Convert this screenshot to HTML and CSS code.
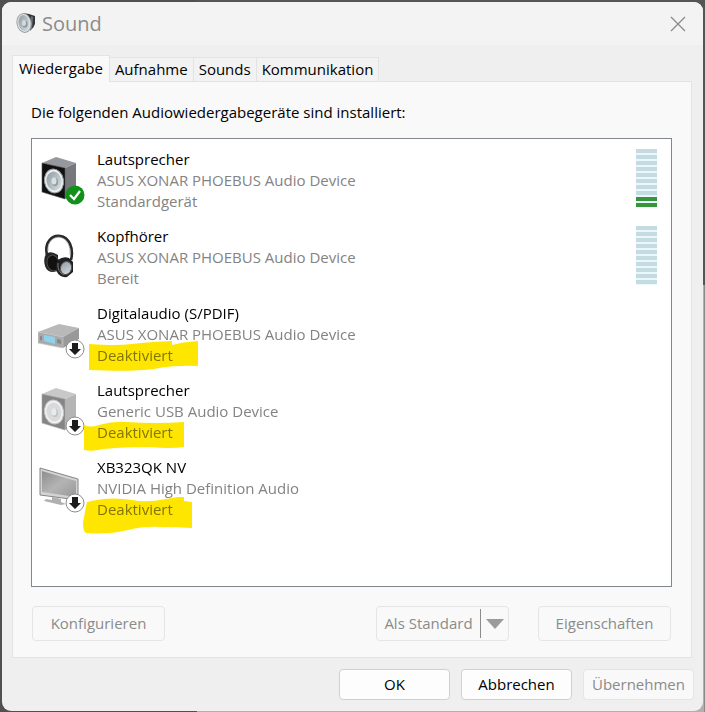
FILE: index.html
```
<!DOCTYPE html>
<html lang="de">
<head>
<meta charset="UTF-8" />
<meta name="viewport" content="width=device-width, initial-scale=1" />
<title>Sound</title>
<link rel="stylesheet" href="styles.css">
</head>
<body>

<!-- shared icon parts -->
<svg class="defs" width="0" height="0" aria-hidden="true">
  <defs>
    <linearGradient id="cone" x1="0" y1="0" x2="1" y2="1">
      <stop offset="0" stop-color="#8f9ba2" />
      <stop offset=".6" stop-color="#b9c3c8" />
      <stop offset="1" stop-color="#dde3e6" />
    </linearGradient>
    <linearGradient id="screen" x1="0" y1="0" x2="1" y2="1">
      <stop offset="0" stop-color="#8e8e8e" />
      <stop offset=".5" stop-color="#b4b4b4" />
      <stop offset="1" stop-color="#989898" />
    </linearGradient>
    <symbol id="arrow-badge" viewBox="0 0 20 20">
      <circle cx="10" cy="10" r="9" fill="#fff" stroke="#8c8c8c" stroke-width="1" />
      <path d="M7 4h6v6h3l-6 6-6-6h3z" fill="#1c1c1c" />
    </symbol>
    <symbol id="check-badge" viewBox="0 0 20 20">
      <circle cx="10" cy="10" r="9.5" fill="#12911a" />
      <path d="M5 10l4 4 6-8" fill="none" stroke="#fff" stroke-width="2.2" />
    </symbol>
  </defs>
</svg>

<main class="window">
  <header class="titlebar">
    <svg class="title-icon" width="20" height="22" viewBox="0 0 20 22" aria-hidden="true">
      <path d="M7 0l6 1 6 2v8l-2 4-7 4z" fill="#33363a" />
      <path d="M15 3l2 1-1 12-2 2z" fill="#6d7276" />
      <ellipse cx="8" cy="10" rx="7" ry="9.5" transform="rotate(-10 8 10)" fill="#e5e8ea" stroke="#9aa0a4" />
      <ellipse cx="8" cy="10" rx="5.5" ry="8" transform="rotate(-10 8 10)" fill="url(#cone)" />
      <ellipse cx="9" cy="11" rx="2.5" ry="3.5" fill="#8c9499" />
      <ellipse cx="8" cy="10" rx="2" ry="3" fill="#d3dadd" />
    </svg>
    <h1>Sound</h1>
    <button class="close" type="button" aria-label="Schließen">
      <svg width="16" height="16" viewBox="0 0 16 16"><path d="M1 1l14 14M15 1L1 15" stroke="#8a8a8a" stroke-width="1.3" /></svg>
    </button>
  </header>

  <div class="tabs" role="tablist">
    <button class="tab active" type="button" role="tab" aria-selected="true">Wiedergabe</button>
    <button class="tab" type="button" role="tab">Aufnahme</button>
    <button class="tab" type="button" role="tab">Sounds</button>
    <button class="tab" type="button" role="tab">Kommunikation</button>
  </div>

  <section class="panel">
    <p class="intro">Die folgenden Audiowiedergabegeräte sind installiert:</p>

    <ul class="devices">
      <li class="device">
        <div class="icon">
          <svg width="44" height="44" viewBox="-3 0 44 44" aria-hidden="true">
            <path d="M1 6L15 0l20 6-11 5z" fill="#97989d" />
            <path d="M24 11l11-5v27l-11 9z" fill="#77787e" />
            <path d="M1 6l23 5v31L1 35z" fill="#111" stroke="#555" stroke-width=".6" />
            <ellipse cx="13" cy="24" rx="9.5" ry="12" transform="rotate(-10 13 24)" fill="#eceff0" stroke="#949a9d" />
            <ellipse cx="13" cy="24" rx="7.5" ry="9.5" transform="rotate(-10 13 24)" fill="url(#cone)" />
            <ellipse cx="14" cy="25" rx="3" ry="4" fill="#909a9e" />
            <ellipse cx="13" cy="24" rx="2.5" ry="3.5" fill="#d9e0e2" />
          </svg>
          <svg class="badge" aria-hidden="true"><use href="#check-badge" /></svg>
        </div>
        <div class="text">
          <strong>Lautsprecher</strong>
          <span>ASUS XONAR PHOEBUS Audio Device</span>
          <span>Standardgerät</span>
        </div>
        <div class="meter"><i></i><i></i><i></i><i></i><i></i><i></i><i></i><i></i><i class="on"></i><i class="on"></i></div>
      </li>

      <li class="device">
        <div class="icon">
          <svg width="44" height="44" viewBox="-3 0 44 44" aria-hidden="true">
            <path d="M6 21C3 8 11 1 19 2c9 1 14 12 11 24" fill="none" stroke="#292929" stroke-width="2.6" />
            <path d="M7 17C6 8 12 3 18 3c7 1 12 8 11 18" fill="none" stroke="#969696" stroke-width=".7" />
            <path d="M5 20q3-3 8-1l4 2v16l-5 1q-6 0-8-6-2-7 1-12z" fill="#252525" />
            <ellipse cx="12" cy="29" rx="6" ry="8" transform="rotate(-12 12 29)" fill="#111" stroke="#505050" />
            <path d="M17 26q5-4 11-2l4 4v10l-6 5q-7 1-10-5-2-7 1-12z" fill="#202020" />
            <path d="M17 29q-1 9 6 12" fill="none" stroke="#777" stroke-width="1" />
            <ellipse cx="25" cy="34" rx="5.5" ry="6.5" transform="rotate(18 25 34)" fill="url(#cone)" stroke="#555" />
          </svg>
        </div>
        <div class="text">
          <strong>Kopfhörer</strong>
          <span>ASUS XONAR PHOEBUS Audio Device</span>
          <span>Bereit</span>
        </div>
        <div class="meter"><i></i><i></i><i></i><i></i><i></i><i></i><i></i><i></i><i></i><i></i></div>
      </li>

      <li class="device">
        <div class="icon">
          <svg width="44" height="44" viewBox="0 0 44 44" aria-hidden="true">
            <path d="M0 21L21 13l20 4-16 9z" fill="#b9b9b9" />
            <path d="M25 26l16-9v11l-16 9z" fill="#999" />
            <path d="M0 21l25 5v11L0 32z" fill="#a9a9a9" stroke="#c4c4c4" stroke-width=".7" />
            <path d="M6 24l11 2v7L6 30z" fill="#8fd0ec" />
            <path d="M2 25l2 .5v4L2 29zM19 28l4 1v4l-4-1z" fill="#85898c" />
          </svg>
          <svg class="badge" aria-hidden="true"><use href="#arrow-badge" /></svg>
        </div>
        <div class="text">
          <svg class="marker" width="112" height="32" viewBox="0 0 112 32" aria-hidden="true"><path d="M0 3q26 2 43 0t40-3v4q10-3 26-4v25q-24-1-44 3-22 3-65 1z" /></svg>
          <strong>Digitalaudio (S/PDIF)</strong>
          <span>ASUS XONAR PHOEBUS Audio Device</span>
          <span>Deaktiviert</span>
        </div>
      </li>

      <li class="device">
        <div class="icon">
          <svg width="44" height="44" viewBox="-3 0 44 44" aria-hidden="true">
            <path d="M1 6L15 0l20 6-11 5z" fill="#c8c8c8" />
            <path d="M24 11l11-5v27l-11 9z" fill="#b5b5b6" />
            <path d="M1 6l23 5v31L1 35z" fill="#858585" stroke="#aaa" stroke-width=".6" />
            <ellipse cx="13" cy="24" rx="9.5" ry="12" transform="rotate(-10 13 24)" fill="#f2f2f2" stroke="#c4c4c4" />
            <ellipse cx="13" cy="24" rx="7.5" ry="9.5" transform="rotate(-10 13 24)" fill="#d9dadb" />
            <ellipse cx="14" cy="25" rx="3" ry="4" fill="#bfc2c4" />
            <ellipse cx="13" cy="24" rx="2.5" ry="3.5" fill="#e9ebec" />
          </svg>
          <svg class="badge" aria-hidden="true"><use href="#arrow-badge" /></svg>
        </div>
        <div class="text">
          <svg class="marker usb" width="104" height="32" viewBox="0 0 104 32" aria-hidden="true"><path d="M1 5q7 3 15 0 14-4 28-3 30 2 57 0v25q-15 2-33 0-30 0-48 2-10 3-19 1z" /></svg>
          <strong>Lautsprecher</strong>
          <span>Generic USB Audio Device</span>
          <span>Deaktiviert</span>
        </div>
      </li>

      <li class="device">
        <div class="icon">
          <svg width="44" height="44" viewBox="0 0 44 44" aria-hidden="true">
            <path d="M14 32l9 2v3l5 2-5 1-17-4 2-2 6 1z" fill="#b0b0b0" />
            <path d="M2 3l38 11v21L2 30z" fill="#d4d4d4" stroke="#858585" stroke-width="1" />
            <path d="M4 6l34 10v16L4 27z" fill="url(#screen)" />
          </svg>
          <svg class="badge" aria-hidden="true"><use href="#arrow-badge" /></svg>
        </div>
        <div class="text">
          <svg class="marker nv" width="112" height="38" viewBox="0 0 112 38" aria-hidden="true"><path d="M4 5q22-6 45-2 14 3 34-1l18-3v5l8 1v26q-16-1-30-1-18-1-34 3-20 5-42 3-3-2-3-10 2-12 4-21z" /></svg>
          <strong>XB323QK NV</strong>
          <span>NVIDIA High Definition Audio</span>
          <span>Deaktiviert</span>
        </div>
      </li>
    </ul>

    <div class="actions">
      <button class="btn" type="button" disabled>Konfigurieren</button>
      <div class="split">
        <button type="button" disabled>Als Standard</button>
        <button class="drop" type="button" disabled aria-label="Standard auswählen">
          <svg width="18" height="10" viewBox="0 0 18 10"><path d="M0 0h18L9 10z" fill="#9b9b9b" /></svg>
        </button>
      </div>
      <button class="btn" type="button" disabled>Eigenschaften</button>
    </div>
  </section>

  <footer class="footer">
    <button class="btn" type="button">OK</button>
    <button class="btn" type="button">Abbrechen</button>
    <button class="btn" type="button" disabled>Übernehmen</button>
  </footer>
</main>

</body>
</html>
```
FILE: styles.css
```
* { box-sizing: border-box; }
body { margin: 0; padding: 2px 2px 1px; background: linear-gradient(#555 40%, #b0b0b0 40%) right / 72% 100% no-repeat #505050; color: #000; font-family: "Open Sans", "Noto Sans", sans-serif; font-size: 15px; line-height: 21px; }
button { font: inherit; color: inherit; margin: 0; padding: 0; border: 0; background: none; }
.defs { position: absolute; }

.window { background: #efefef; border-radius: 9px; overflow: hidden; padding-bottom: 11px; }

.titlebar { display: flex; align-items: center; height: 43px; padding: 0 17px 0 14px; background: #f3f3f3; }
.titlebar h1 { flex: 1; margin: 0 0 0 6px; font-size: 20px; font-weight: 400; color: #8b8b8b; }
.close { display: flex; }

.tabs { display: flex; align-items: flex-end; height: 36px; padding: 0 10px; }
.tab { height: 24px; padding: 0 5px; border: 1px solid #e3e3e3; border-bottom: 0; border-left: 0; background: #f2f2f2; }
.tab.active { position: relative; height: 27px; margin-bottom: -1px; padding: 0 6px 2px; border-left: 1px solid #e3e3e3; background: #f9f9f9; }

.panel { margin: 0 11px 0 10px; padding: 20px 19px 16px 18px; border: 1px solid #e3e3e3; background: #f9f9f9; }
.intro { margin: 0 0 15px; }

.devices { list-style: none; height: 449px; margin: 0; padding: 10px 14px 0 6px; border: 1px solid #828790; background: #fff; }
.device { display: flex; height: 77px; }
.icon { position: relative; flex: none; width: 48px; height: 48px; margin-top: 8px; }
.badge { position: absolute; left: 27px; top: 28px; width: 20px; height: 20px; }
.text { position: relative; z-index: 0; flex: 1; margin-left: 11px; }
.text strong, .text span { display: block; font-weight: 400; }
.text span { color: #838383; }

/* yellow highlighter strokes */
.marker { position: absolute; z-index: 1; left: -8px; top: 38px; fill: #ffe600; mix-blend-mode: multiply; }
.marker.usb { left: -14px; top: 40px; }
.marker.nv { left: -14px; top: 40px; }

.meter { display: flex; flex-direction: column; gap: 2px; flex: none; width: 21px; height: 59px; background: #eaf8fc; }
.meter i { height: 4px; background: #c4dbe1; }
.meter .on { background: #37963b; }

.actions { display: flex; margin-top: 19px; padding: 0 1px; }
.btn { border: 1px solid #d0d0d0; border-radius: 4px; background: #fdfdfd; }
.btn:disabled, .split { border: 1px solid #e5e5e5; border-radius: 4px; background: #f9f9f9; color: #8b8b8b; }
.actions .btn, .split { width: 133px; height: 35px; }
.split { display: flex; align-items: center; margin: 0 29px 0 auto; }
.split button { flex: 1; color: #8b8b8b; }
.split .drop { display: flex; flex: none; align-items: center; justify-content: center; width: 28px; height: 29px; border-left: 1px solid #8b8b8b; }

.footer { display: flex; justify-content: flex-end; gap: 11px; margin-top: 11px; padding-right: 9px; }
.footer .btn { width: 111px; height: 31px; }
```
